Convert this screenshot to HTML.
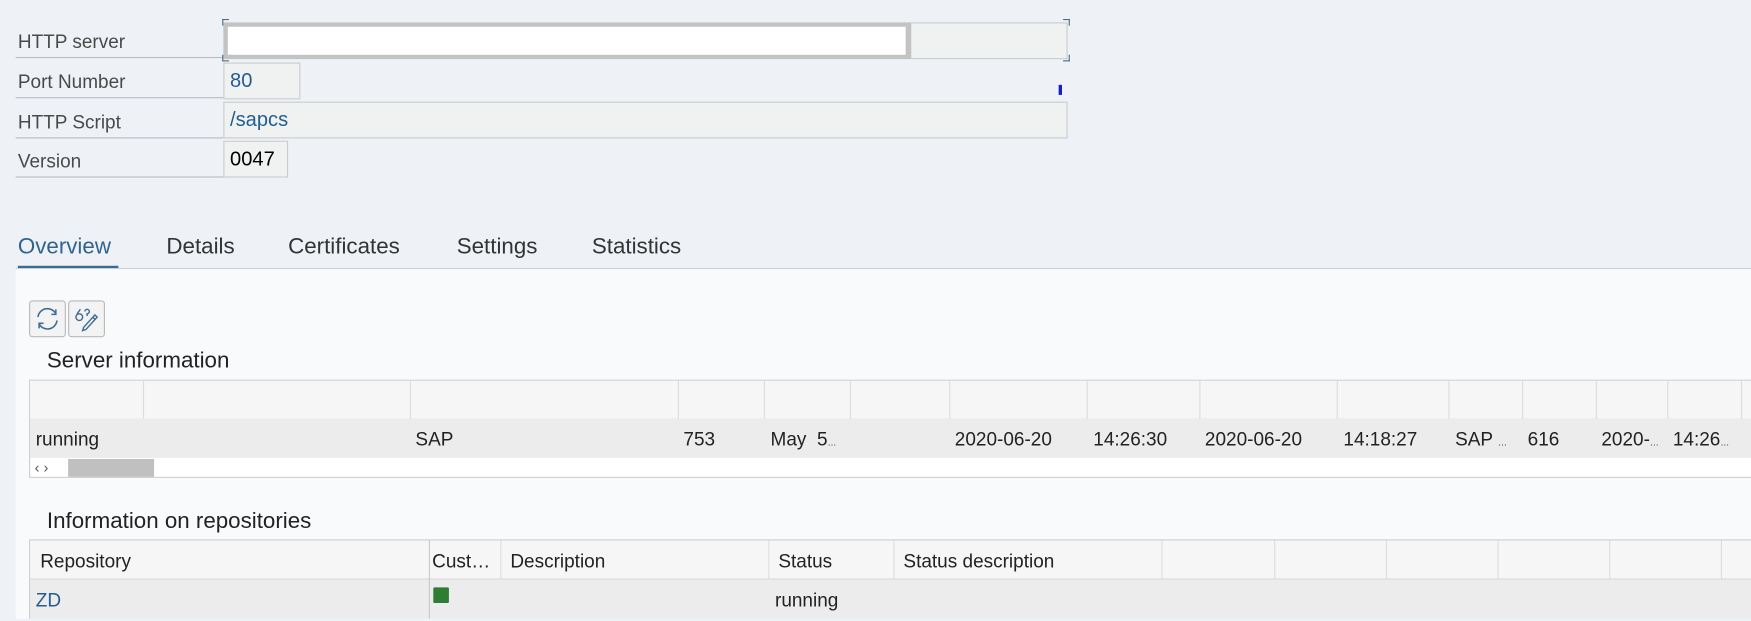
<!DOCTYPE html>
<html><head><meta charset="utf-8"><style>
html,body{margin:0;padding:0;width:1751px;height:618px;overflow:hidden;background:#eef2f6;}
#w{position:absolute;left:0;top:0;width:1568px;height:554px;transform:scale(1.11671);transform-origin:0 0;font-family:"Liberation Sans",sans-serif;color:#222;}
.a{position:absolute;}
.lbl{position:absolute;left:14px;width:186px;height:35px;border-bottom:1px solid #b7bcc2;font-size:17px;color:#4a4a4a;line-height:41px;padding-left:2px;box-sizing:border-box;}
.fld{position:absolute;background:#f0f1f1;border:1px solid #c9ccce;box-sizing:border-box;font-size:18px;line-height:31px;padding-left:5px;color:#235d91;}
.tab{position:absolute;top:210px;font-size:20px;color:#333;}
.t{position:absolute;font-size:17px;line-height:36px;white-space:nowrap;}
.vl{position:absolute;width:1px;background:#dcdcdc;}
.c{position:absolute;width:5px;height:5px;border-color:#4a6a88;border-style:solid;border-width:0;}
</style></head><body><div id="w">
<div class="lbl" style="top:17px">HTTP server</div>
<div class="lbl" style="top:53px">Port Number</div>
<div class="lbl" style="top:89px">HTTP Script</div>
<div class="lbl" style="top:124px">Version</div>
<div class="fld" style="left:815px;top:20px;width:141px;height:33px;"></div>
<div class="a" style="left:200px;top:20px;width:616px;height:33px;background:#fff;border:4px solid #c3c3c3;border-right-width:5px;box-sizing:border-box;"></div>
<div class="c" style="left:199px;top:17px;border-left-width:1px;border-top-width:1px"></div>
<div class="c" style="left:199px;top:49px;border-left-width:1px;border-bottom-width:1px"></div>
<div class="c" style="left:952px;top:17px;border-right-width:1px;border-top-width:1px"></div>
<div class="c" style="left:952px;top:49px;border-right-width:1px;border-bottom-width:1px"></div>
<div class="fld" style="left:200px;top:56px;width:69px;height:33px;">80</div>
<div class="fld" style="left:200px;top:91px;width:756px;height:33px;">/sapcs</div>
<div class="fld" style="left:200px;top:126px;width:58px;height:33px;color:#000;">0047</div>
<div class="a" style="left:948px;top:76px;width:3px;height:9px;background:#1a1ad0;"></div>

<div class="a" style="left:14px;top:240px;width:1554px;height:1px;background:#c8d0d8;"></div>
<div class="a" style="left:14px;top:241px;width:1554px;height:313px;background:#f8fafc;"></div>
<div class="tab" style="left:16px;color:#32638f;">Overview</div>
<div class="a" style="left:16px;top:238px;width:90px;height:2px;background:#3a6a95;"></div>
<div class="tab" style="left:149px">Details</div>
<div class="tab" style="left:258px">Certificates</div>
<div class="tab" style="left:409px">Settings</div>
<div class="tab" style="left:530px">Statistics</div>

<div class="a" style="left:26px;top:269px;width:33px;height:33px;border:1px solid #b9b9b9;border-radius:3px;background:#f3f3f3;box-sizing:border-box;">
<svg width="31" height="31" viewBox="0 0 31 31"><g fill="none" stroke="#3f6d96" stroke-width="1.4"><path d="M7 14 A8.5 8.5 0 0 1 23 11"/><path d="M24 17 A8.5 8.5 0 0 1 8 20"/><path d="M23 7 L23 11.5 L19 11.5"/><path d="M8 24 L8 19.5 L12 19.5"/></g></svg></div>
<div class="a" style="left:61px;top:269px;width:33px;height:33px;border:1px solid #b9b9b9;border-radius:3px;background:#f3f3f3;box-sizing:border-box;">
<svg width="31" height="31" viewBox="0 0 31 31"><g fill="none" stroke="#3f6d96" stroke-width="1.3"><circle cx="9" cy="14" r="3"/><path d="M7 11 L10 7"/><path d="M14 9 a2 2 0 1 1 2 2 v2"/><path d="M13 23 L23 12 L25 14 L15 25 L12 26 Z"/><path d="M21 14 L23 16"/></g></svg></div>

<div class="a" style="left:42px;top:312px;font-size:20px;">Server information</div>
<div class="a" style="left:26px;top:340px;width:1542px;height:88px;border:1px solid #cfcfcf;border-right:none;background:#fff;box-sizing:border-box;"></div>
<div class="a" style="left:27px;top:341px;width:1541px;height:34px;background:#f6f6f6;border-bottom:1px solid #e0e0e0;"></div>
<div class="a" style="left:27px;top:375px;width:1541px;height:35px;background:#ececec;"></div>
<div class="vl" style="left:128px;top:341px;height:34px"></div>
<div class="vl" style="left:367px;top:341px;height:34px"></div>
<div class="vl" style="left:607px;top:341px;height:34px"></div>
<div class="vl" style="left:684px;top:341px;height:34px"></div>
<div class="vl" style="left:761px;top:341px;height:34px"></div>
<div class="vl" style="left:850px;top:341px;height:34px"></div>
<div class="vl" style="left:973px;top:341px;height:34px"></div>
<div class="vl" style="left:1074px;top:341px;height:34px"></div>
<div class="vl" style="left:1197px;top:341px;height:34px"></div>
<div class="vl" style="left:1297px;top:341px;height:34px"></div>
<div class="vl" style="left:1363px;top:341px;height:34px"></div>
<div class="vl" style="left:1429px;top:341px;height:34px"></div>
<div class="vl" style="left:1493px;top:341px;height:34px"></div>
<div class="vl" style="left:1559px;top:341px;height:34px"></div>
<div class="t" style="left:32px;top:376px">running</div>
<div class="t" style="left:372px;top:376px">SAP</div>
<div class="t" style="left:612px;top:376px">753</div>
<div class="t" style="left:690px;top:376px">May&nbsp; 5<span style="font-size:8px">…</span></div>
<div class="t" style="left:855px;top:376px">2020-06-20</div>
<div class="t" style="left:979px;top:376px">14:26:30</div>
<div class="t" style="left:1079px;top:376px">2020-06-20</div>
<div class="t" style="left:1203px;top:376px">14:18:27</div>
<div class="t" style="left:1303px;top:376px">SAP <span style="font-size:8px">…</span></div>
<div class="t" style="left:1368px;top:376px">616</div>
<div class="t" style="left:1434px;top:376px">2020-<span style="font-size:8px">…</span></div>
<div class="t" style="left:1498px;top:376px">14:26<span style="font-size:8px">…</span></div>
<div class="a" style="left:31px;top:410px;font-size:13px;color:#555;line-height:17px;">‹ ›</div>
<div class="a" style="left:61px;top:411px;width:77px;height:16px;background:#c0c0c0;"></div>

<div class="a" style="left:42px;top:456px;font-size:20px;">Information on repositories</div>
<div class="a" style="left:26px;top:483px;width:1542px;height:71px;border:1px solid #cfcfcf;border-right:none;border-bottom:none;background:#ececec;box-sizing:border-box;"></div>
<div class="a" style="left:27px;top:484px;width:1541px;height:34px;background:#f6f6f6;border-bottom:1px solid #dadada;"></div>
<div class="vl" style="left:384px;top:484px;height:70px;background:#c8c8c8"></div>
<div class="vl" style="left:448px;top:484px;height:34px"></div>
<div class="vl" style="left:688px;top:484px;height:34px"></div>
<div class="vl" style="left:800px;top:484px;height:34px"></div>
<div class="vl" style="left:1040px;top:484px;height:34px"></div>
<div class="vl" style="left:1141px;top:484px;height:34px"></div>
<div class="vl" style="left:1241px;top:484px;height:34px"></div>
<div class="vl" style="left:1341px;top:484px;height:34px"></div>
<div class="vl" style="left:1441px;top:484px;height:34px"></div>
<div class="vl" style="left:1541px;top:484px;height:34px"></div>
<div class="t" style="left:36px;top:485px">Repository</div>
<div class="t" style="left:387px;top:485px">Cust…</div>
<div class="t" style="left:457px;top:485px">Description</div>
<div class="t" style="left:697px;top:485px">Status</div>
<div class="t" style="left:809px;top:485px">Status description</div>
<div class="t" style="left:32px;top:520px;color:#235d91">ZD</div>
<div class="a" style="left:388px;top:526px;width:14px;height:14px;background:#2e7d32;border-radius:1px;"></div>
<div class="t" style="left:694px;top:520px">running</div>
</div></body></html>
